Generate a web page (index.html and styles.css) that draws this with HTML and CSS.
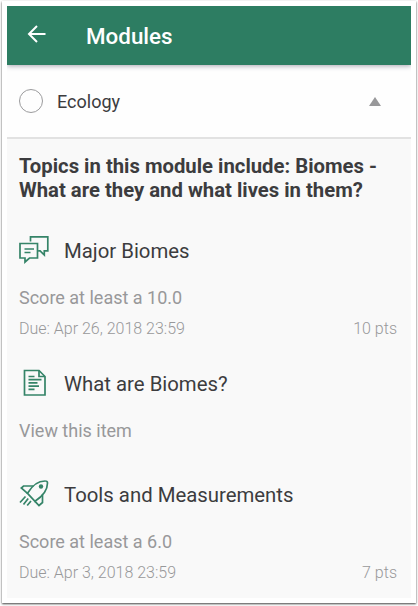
FILE: index.html
```
<!DOCTYPE html>
<html lang="en">
<head>
    <meta charset="utf-8">
    <title>Modules</title>
    <link rel="stylesheet" href="styles.css">
</head>
<body>
    <div class="frame">
        <header class="toolbar">
            <svg class="back" width="20" height="20" viewBox="0 0 20 20">
                <path d="M18.5 10H2M10 2L2 10l8 8"/>
            </svg>
            <h1>Modules</h1>
        </header>
        <div class="module">
            <span class="circle"></span>
            <span class="module-name">Ecology</span>
            <span class="arrow"></span>
        </div>
        <main class="content">
            <h2>Topics in this module include: Biomes - What are they and what lives in them?</h2>

            <div class="item">
                <div class="item-head">
                    <svg class="icon" width="32" height="32" viewBox="0 0 32 32">
                        <path d="M1 8.500h17.500v14.500h-8l-4.500 4v-4H1z"/>
                        <path d="M11.500 6.500V1.800h17.300v14h-3.500v4.200l-4.200-4.200h-2"/>
                        <path d="M5.500 14h9.500M5.500 17.500h6"/>
                    </svg>
                    <span class="title">Major Biomes</span>
                </div>
                <p class="req">Score at least a 10.0</p>
                <div class="details"><span>Due: Apr 26, 2018 23:59</span><span>10 pts</span></div>
            </div>

            <div class="item page">
                <div class="item-head">
                    <svg class="icon" width="32" height="32" viewBox="0 0 32 32">
                        <path d="M5.500 2.500h14.500l6 6v18.500H5.500z"/>
                        <path d="M20 2.500V8.500h6"/>
                        <path d="M9.500 8.500h6M9.500 11.700h13M9.500 14.900h9M9.500 18.100h10.500M9.500 21.300h6"/>
                    </svg>
                    <span class="title">What are Biomes?</span>
                </div>
                <p class="req">View this item</p>
            </div>

            <div class="item">
                <div class="item-head">
                    <svg class="icon" width="32" height="32" viewBox="0 0 32 32">
                        <path d="M8.500 14.300C12.500 7.500 18 1.800 26.500 2Q28.500 2 28.500 4C28.500 11 24 17 16 22.300z"/>
                        <path d="M14.500 7H4.500L2.300 9L8.500 14.300M23.500 15.500V23.500L20 26.500L16 22.300"/>
                        <circle class="window" cx="22" cy="7.500" r="2.200"/>
                        <path d="M6.500 17.500L1 23.500M9.200 19.500L4.500 25.500M12 22L8.200 26.500"/>
                    </svg>
                    <span class="title">Tools and Measurements</span>
                </div>
                <p class="req">Score at least a 6.0</p>
                <div class="details"><span>Due: Apr 3, 2018 23:59</span><span>7 pts</span></div>
            </div>
        </main>
    </div>
</body>
</html>
```
FILE: styles.css
```
body {
    margin: 0;
    padding: 1px 2px 3px;
    height: 602px;
    overflow: hidden;
    background: #fff;
    font-family: Roboto, sans-serif;
    color: #3c3c3e;
}
h1, h2, p {
    margin: 0;
}
.frame {
    box-sizing: border-box;
    height: 602px;
    padding: 5px;
    background: #fff;
    box-shadow: 0 1px 2px rgba(0, 0, 0, 0.75);
    display: flex;
    flex-direction: column;
}
.toolbar {
    position: relative;
    z-index: 1;
    display: flex;
    flex: none;
    align-items: center;
    height: 59px;
    padding-left: 20px;
    background: #2d7d62;
    box-shadow: 0 1px 5px rgba(40, 30, 60, 0.4);
    clip-path: inset(0 0 -10px 0);
}
.back {
    fill: none;
    stroke: #fff;
    stroke-width: 2;
    margin-top: -3px;
}
h1 {
    margin-left: 39px;
    font-size: 22.4px;
    font-weight: 500;
    line-height: 26px;
    color: #fff;
}
.module {
    display: flex;
    flex: none;
    align-items: center;
    height: 72px;
    padding: 0 30px 0 12px;
    border-bottom: 2px solid #e2e2e2;
    background: #fefefe;
}
.circle {
    box-sizing: border-box;
    width: 24px;
    height: 24px;
    border: 1.5px solid #9b9b9d;
    border-radius: 50%;
}
.module-name {
    flex: 1;
    margin-left: 14px;
    font-size: 18px;
}
.arrow {
    border: 6px solid transparent;
    border-top: 0;
    border-bottom: 9px solid #98989a;
}
.content {
    flex: 1;
    min-height: 0;
    padding: 15px 14px 0 12px;
    background: #f9f9f9;
}
h2 {
    font-size: 20.3px;
    font-weight: 700;
    line-height: 24px;
    white-space: normal;
    margin-right: -6px;
}
.item {
    height: 133px;
}
.item.page {
    height: 111px;
}
.item:last-child {
    height: auto;
}
h2 + .item {
    margin-top: 31px;
}
.item-head {
    display: flex;
    align-items: center;
    height: 36px;
}
.icon {
    fill: none;
    stroke: #358468;
    stroke-width: 1.7;
}
.window {
    fill: #358468;
    stroke: none;
}
.title {
    margin-left: 13px;
    font-size: 20.35px;
}
.req {
    margin-top: 17px;
    font-size: 18px;
    line-height: 24px;
    color: #98989a;
}
.details {
    display: flex;
    justify-content: space-between;
    margin-top: 9px;
    font-size: 16px;
    font-weight: 300;
    line-height: 20px;
    color: #98989a;
}
```
